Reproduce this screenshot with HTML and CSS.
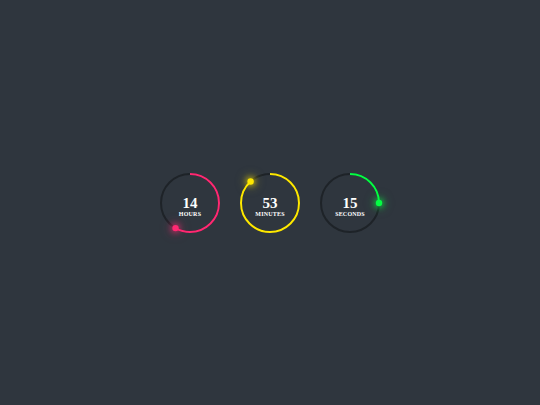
FILE: index.html
```html
<!DOCTYPE html>
<html>
<head>
<meta charset="utf-8">
<link rel="stylesheet" href="styles.css">
</head>
<body>
  <div class="timer">
    <div class="dial">
      <svg class="ring" viewBox="0 0 64 64" width="64" height="64">
        <circle class="track" cx="32" cy="32" r="29"/>
        <circle class="arc pink" cx="32" cy="32" r="29" pathLength="360" stroke-dasharray="210 360" transform="rotate(-90 32 32)"/>
        <circle class="dot dot-pink" cx="17.5" cy="57.11" r="3.2"/>
      </svg>
      <div class="label"><span class="num">14</span><span class="unit">Hours</span></div>
    </div>
    <div class="dial">
      <svg class="ring" viewBox="0 0 64 64" width="64" height="64">
        <circle class="track" cx="32" cy="32" r="29"/>
        <circle class="arc yellow" cx="32" cy="32" r="29" pathLength="360" stroke-dasharray="318 360" transform="rotate(-90 32 32)"/>
        <circle class="dot dot-yellow" cx="12.6" cy="10.45" r="3.2"/>
      </svg>
      <div class="label"><span class="num">53</span><span class="unit">Minutes</span></div>
    </div>
    <div class="dial">
      <svg class="ring" viewBox="0 0 64 64" width="64" height="64">
        <circle class="track" cx="32" cy="32" r="29"/>
        <circle class="arc green" cx="32" cy="32" r="29" pathLength="360" stroke-dasharray="90 360" transform="rotate(-90 32 32)"/>
        <circle class="dot dot-green" cx="61" cy="32" r="3.2"/>
      </svg>
      <div class="label"><span class="num">15</span><span class="unit">Seconds</span></div>
    </div>
  </div>
</body>
</html>
```
FILE: styles.css
```css
html, body {
  margin: 0;
  height: 100%;
}
body {
  background: #2f363e;
  display: flex;
  align-items: center;
  justify-content: center;
  font-family: "Liberation Serif", "DejaVu Serif", serif;
}
.timer {
  display: flex;
  gap: 16px;
}
.dial {
  position: relative;
  width: 64px;
  height: 64px;
}
.ring {
  display: block;
  overflow: visible;
}
.track {
  fill: none;
  stroke: #1e2328;
  stroke-width: 2;
}
.arc {
  fill: none;
  stroke-width: 2;
}
.pink { stroke: #ff2972; }
.yellow { stroke: #fee800; }
.green { stroke: #04fc43; }
.dot-pink { fill: #ff2972; filter: drop-shadow(0 0 3px #ff2972) drop-shadow(0 0 5px rgba(255, 41, 114, 0.6)); }
.dot-yellow { fill: #fee800; filter: drop-shadow(0 0 3px #fee800) drop-shadow(0 0 5px rgba(254, 232, 0, 0.5)); }
.dot-green { fill: #04fc43; filter: drop-shadow(0 0 3px #04fc43) drop-shadow(0 0 5px rgba(4, 252, 67, 0.5)); }
.label {
  position: absolute;
  inset: 0;
  display: flex;
  flex-direction: column;
  align-items: center;
  justify-content: center;
  color: #fff;
  padding-top: 8px;
}
.num {
  font-size: 15px;
  font-weight: bold;
  line-height: 15px;
}
.unit {
  font-size: 6px;
  font-weight: bold;
  text-transform: uppercase;
  letter-spacing: 0.2px;
  line-height: 7px;
}
```
